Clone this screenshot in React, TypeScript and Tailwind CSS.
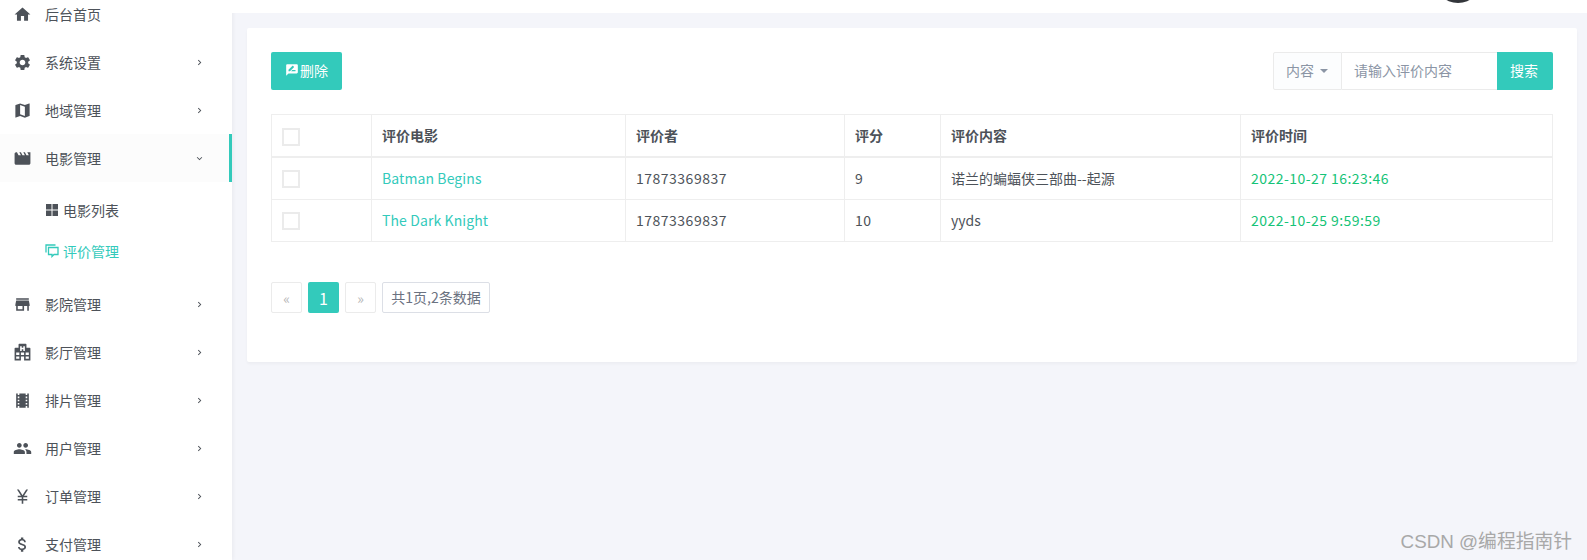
import React from "react";
import { MdHome, MdSettings, MdMap, MdMovie, MdStore, MdLocalMovies, MdPeople, MdAttachMoney, MdCurrencyYen, MdChevronRight, MdExpandMore, MdRateReview } from "react-icons/md";

const FONT = "font-['Noto_Sans_CJK_SC','Microsoft_YaHei',sans-serif]";

function GridIcon() {
  return (
    <svg width="14" height="14" viewBox="0 0 14 14" className="text-[#4d5259]" fill="currentColor">
      <rect x="1" y="1" width="5.5" height="5.5" />
      <rect x="7.5" y="1" width="5.5" height="5.5" />
      <rect x="1" y="7.5" width="5.5" height="5.5" />
      <rect x="7.5" y="7.5" width="5.5" height="5.5" />
    </svg>
  );
}

function CommentsIcon() {
  return (
    <svg width="14" height="14" viewBox="0 0 14 14" fill="none" stroke="#33cabb" strokeWidth="1.3">
      <path d="M3.5 3.5h9.5v7H9l-2 2v-2H3.5z" />
      <path d="M1 8.5V1h9.5" />
    </svg>
  );
}

function HospitalBuilding() {
  return (
    <svg width="1em" height="1em" viewBox="0 0 24 24" fill="currentColor">
      <path d="M2,22V7A1,1 0 0,1 3,6H7V2A1,1 0 0,1 8,1H16A1,1 0 0,1 17,2V6H21A1,1 0 0,1 22,7V22H14V17H10V22H2M9,4V10H11V8H13V10H15V4H13V6H11V4H9M4,20H8V17H4V20M4,15H8V12H4V15M16,20H20V17H16V20M16,15H20V12H16V15M10,15H14V12H10V15Z" />
    </svg>
  );
}

function NavItem({ icon, label, open, active }: { icon: React.ReactNode; label: string; open?: boolean; active?: boolean }) {
  return (
    <div className={`relative flex h-12 items-center text-sm text-[#4d5259] ${active ? "bg-[#fcfcfc]" : ""}`}>
      <span className="flex w-[45px] justify-center pr-[1px] text-[19px]">{icon}</span>
      <span className="flex-1">{label}</span>
      {label !== "后台首页" && (
        <span className="mr-[27px] text-[11px] text-[#4d5259]">{open ? <MdExpandMore /> : <MdChevronRight />}</span>
      )}
      {active && <span className="absolute right-0 top-0 h-12 w-[3px] bg-[#33cabb]" />}
    </div>
  );
}

function Checkbox() {
  return <span className="block h-[18px] w-[18px] border-2 border-[#ebebeb] bg-white" />;
}

const th = "border border-[#eeeeee] px-[10px] text-left align-middle text-sm font-bold text-[#4d5259]";
const td = "border border-[#eeeeee] px-[10px] pb-[2px] align-middle text-sm text-[#4d5259]";
const boxCell = "border border-[#eeeeee] px-[10px] align-middle";

function Row({ name, user, score, text, time, tall }: { name: string; user: string; score: string; text: string; time: string; tall?: boolean }) {
  const off = tall ? "pt-[2px]" : "";
  return (
    <tr className={tall ? "h-[43px]" : "h-[42px]"}>
      <td className={`${boxCell} ${off}`}><Checkbox /></td>
      <td className={`${td} ${off} !text-[#33cabb] tracking-[0.1px]`}>{name}</td>
      <td className={`${td} ${off} tracking-[0.5px]`}>{user}</td>
      <td className={`${td} ${off} tracking-[0.5px]`}>{score}</td>
      <td className={`${td} ${off}`}>{text}</td>
      <td className={`${td} ${off} !text-[#15c377] tracking-[0.45px]`}>{time}</td>
    </tr>
  );
}

export default function App() {
  return (
    <div className={`relative flex h-[560px] w-[1587px] overflow-hidden bg-[#f4f5fa] ${FONT}`}>
      <aside className="w-[232px] shrink-0 bg-white shadow-[1px_0_4px_rgba(0,0,0,0.05)]">
        <div className="-mt-[10px]">
          <NavItem icon={<MdHome />} label="后台首页" />
          <NavItem icon={<MdSettings />} label="系统设置" />
          <NavItem icon={<MdMap />} label="地域管理" />
          <NavItem icon={<MdMovie />} label="电影管理" open active />
          <div className="pb-[9px] pt-[7px] text-sm">
            <div className="flex h-[41px] items-center gap-[4px] pl-[45px] text-[#4d5259]"><GridIcon />电影列表</div>
            <div className="flex h-[41px] items-center gap-[4px] pl-[45px] text-[#33cabb]"><CommentsIcon />评价管理</div>
          </div>
          <NavItem icon={<MdStore />} label="影院管理" />
          <NavItem icon={<HospitalBuilding />} label="影厅管理" />
          <NavItem icon={<MdLocalMovies />} label="排片管理" />
          <NavItem icon={<MdPeople />} label="用户管理" />
          <NavItem icon={<MdCurrencyYen />} label="订单管理" />
          <NavItem icon={<MdAttachMoney />} label="支付管理" />
        </div>
      </aside>

      <div className="flex min-w-0 flex-1 flex-col">
        <header className="flex h-[13px] justify-end overflow-hidden bg-white pr-[105px]">
          <span className="-mt-[45px] block h-12 w-12 rounded-full bg-[#33363b]" />
        </header>
        <main className="pl-[15px] pr-[10px] pt-[15px]">
          <section className="h-[334px] rounded-[2px] bg-white p-6 shadow-[0_2px_3px_rgba(0,0,0,0.035)]">
            <div className="flex items-center justify-between">
              <button className="flex h-[38px] w-[71px] items-center justify-center gap-[1px] rounded-[2px] bg-[#33cabb] pb-[2px] text-sm text-white">
                <MdRateReview className="text-[14px]" />删除
              </button>
              <div className="flex h-[38px] w-[280px] text-sm">
                <div className="flex w-[69px] items-center gap-[6px] rounded-l-[2px] border border-[#ebebeb] bg-[#fcfdfe] pb-[2px] pl-[12px] text-[#8b95a5]">
                  内容<span className="mt-[2px] h-0 w-0 border-x-[4px] border-t-[4px] border-x-transparent border-t-[#8b95a5]" />
                </div>
                <div className="flex flex-1 items-center border-y border-[#ebebeb] pb-[2px] pl-[12px] text-[#8b95a5]">请输入评价内容</div>
                <button className="w-[56px] rounded-r-[2px] bg-[#33cabb] pb-[2px] pr-[2px] text-white">搜索</button>
              </div>
            </div>

            <table className="mt-6 w-[1281px] table-fixed border-collapse">
              <colgroup>
                <col className="w-[100px]" />
                <col className="w-[254px]" />
                <col className="w-[219px]" />
                <col className="w-[96px]" />
                <col className="w-[300px]" />
                <col className="w-[312px]" />
              </colgroup>
              <thead>
                <tr className="h-[42px] border-b-2 border-[#eeeeee]">
                  <th className={`${boxCell} pt-[4px]`}><Checkbox /></th>
                  <th className={th}>评价电影</th>
                  <th className={th}>评价者</th>
                  <th className={th}>评分</th>
                  <th className={th}>评价内容</th>
                  <th className={th}>评价时间</th>
                </tr>
              </thead>
              <tbody>
                <Row tall name="Batman Begins" user="17873369837" score="9" text="诺兰的蝙蝠侠三部曲--起源" time="2022-10-27 16:23:46" />
                <Row name="The Dark Knight" user="17873369837" score="10" text="yyds" time="2022-10-25 9:59:59" />
              </tbody>
            </table>

            <div className="mt-10 flex h-[31px] gap-[6px] text-sm">
              <span className="flex w-[31px] items-center justify-center rounded-[2px] border border-[#ebebeb] text-[#b5b5b5]">«</span>
              <span className="flex w-[31px] items-center justify-center rounded-[2px] bg-[#33cabb] text-base text-white">1</span>
              <span className="flex w-[31px] items-center justify-center rounded-[2px] border border-[#ebebeb] text-[#b5b5b5]">»</span>
              <span className="flex w-[108px] items-center justify-center rounded-[2px] border border-[#dcdfe6] pb-[1px] text-sm text-[#6b7280]">共1页,2条数据</span>
            </div>
          </section>
        </main>
      </div>

      <span className="absolute bottom-[4px] right-[15px] font-['Liberation_Sans','Noto_Sans_CJK_SC',sans-serif] text-[18.8px] text-[#a8a8a8]">CSDN @编程指南针</span>
    </div>
  );
}
